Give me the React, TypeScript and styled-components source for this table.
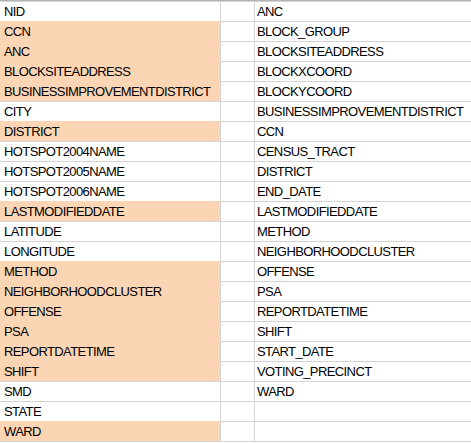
import { Fragment } from "react";
import styled, { createGlobalStyle } from "styled-components";

const GlobalStyle = createGlobalStyle`
  html, body {
    margin: 0;
    padding: 0;
    background: #ffffff;
    overflow: hidden;
  }
`;

const Sheet = styled.div`
  display: grid;
  grid-template-columns: 221px 34px 217px;
  width: 472px;
  border-top: 1px solid #b4b4b4;
  border-bottom: 1px solid #d4d4d4;
  font-family: "Liberation Sans", Arial, sans-serif;
  font-size: 13px;
  letter-spacing: -0.6px;
  color: #000000;
`;

const Cell = styled.div<{ $fill?: boolean; $pad: number }>`
  box-sizing: border-box;
  height: 20px;
  padding: 1px 0 0 ${(p) => p.$pad}px;
  line-height: 18px;
  white-space: nowrap;
  overflow: hidden;
  border-top: 1px solid ${(p) => (p.$fill ? "#fcd5b4" : "#d4d4d4")};
  border-right: 1px solid #d4d4d4;
  background: ${(p) => (p.$fill ? "#fcd5b4" : "#ffffff")};
`;

const left: [string, boolean][] = [
  ["NID", false],
  ["CCN", true],
  ["ANC", true],
  ["BLOCKSITEADDRESS", true],
  ["BUSINESSIMPROVEMENTDISTRICT", true],
  ["CITY", false],
  ["DISTRICT", true],
  ["HOTSPOT2004NAME", false],
  ["HOTSPOT2005NAME", false],
  ["HOTSPOT2006NAME", false],
  ["LASTMODIFIEDDATE", true],
  ["LATITUDE", false],
  ["LONGITUDE", false],
  ["METHOD", true],
  ["NEIGHBORHOODCLUSTER", true],
  ["OFFENSE", true],
  ["PSA", true],
  ["REPORTDATETIME", true],
  ["SHIFT", true],
  ["SMD", false],
  ["STATE", false],
  ["WARD", true],
];

const right = [
  "ANC",
  "BLOCK_GROUP",
  "BLOCKSITEADDRESS",
  "BLOCKXCOORD",
  "BLOCKYCOORD",
  "BUSINESSIMPROVEMENTDISTRICT",
  "CCN",
  "CENSUS_TRACT",
  "DISTRICT",
  "END_DATE",
  "LASTMODIFIEDDATE",
  "METHOD",
  "NEIGHBORHOODCLUSTER",
  "OFFENSE",
  "PSA",
  "REPORTDATETIME",
  "SHIFT",
  "START_DATE",
  "VOTING_PRECINCT",
  "WARD",
  "",
  "",
];

export default function App() {
  return (
    <>
      <GlobalStyle />
      <Sheet>
        {left.map(([name, fill], i) => (
          <Fragment key={i}>
            <Cell $fill={fill} $pad={4}>
              {name}
            </Cell>
            <Cell $pad={2} />
            <Cell $pad={2}>{right[i]}</Cell>
          </Fragment>
        ))}
      </Sheet>
    </>
  );
}
